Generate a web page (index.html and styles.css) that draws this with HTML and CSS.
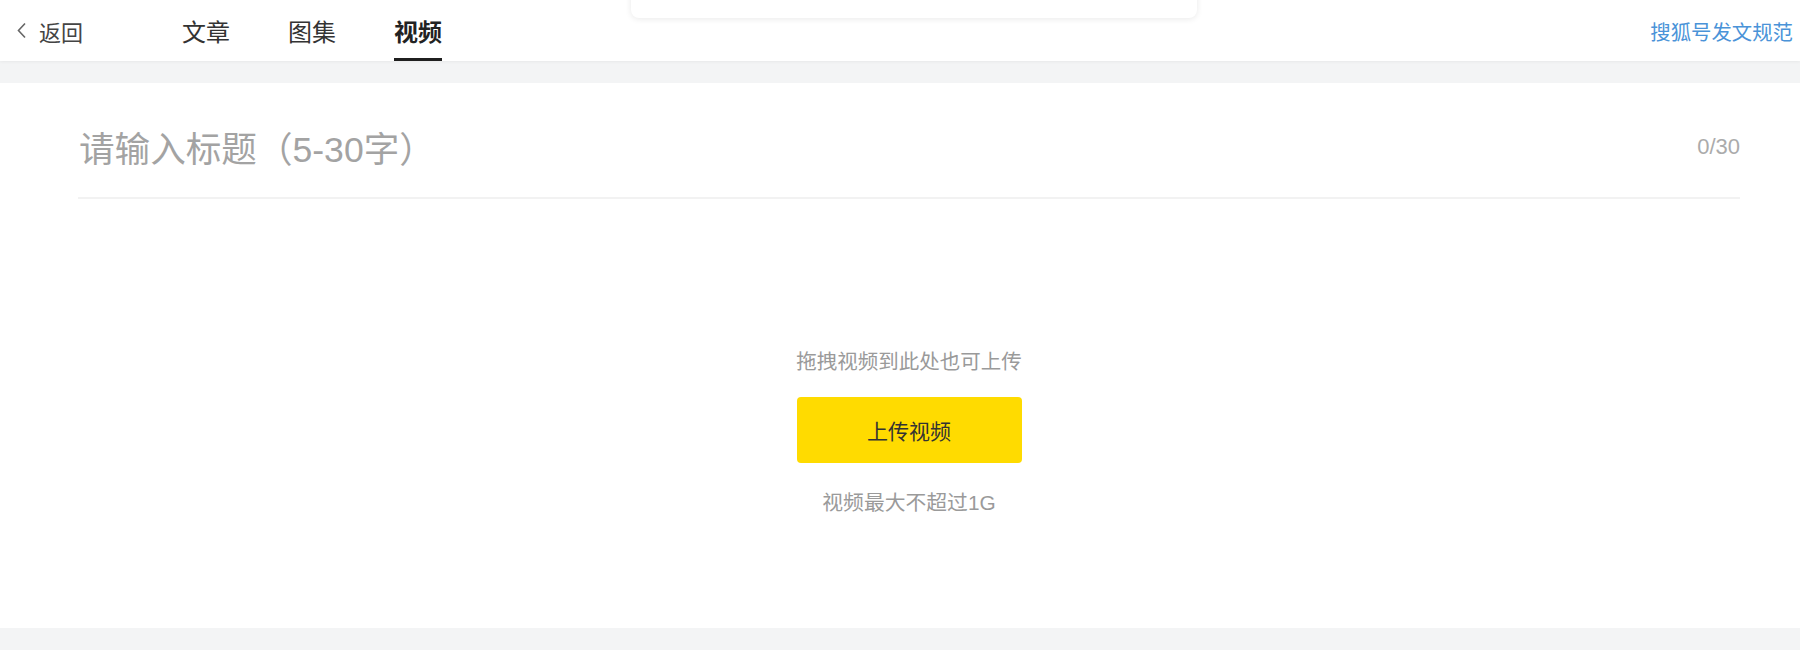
FILE: index.html
```html
<!DOCTYPE html>
<html lang="zh-CN">
<head>
<meta charset="utf-8">
<title>发布视频</title>
<link rel="stylesheet" href="styles.css">
</head>
<body>
<div class="page">
  <header class="topbar">
    <a class="back" href="#">
      <svg class="back-icon" width="11" height="17" viewBox="0 0 11 17"><path d="M9 1.5 L2.5 8.5 L9 15.5" fill="none" stroke="#666" stroke-width="1.6"/></svg>
      <span>返回</span>
    </a>
    <nav class="tabs">
      <a class="tab" href="#">文章</a>
      <a class="tab" href="#">图集</a>
      <a class="tab active" href="#">视频</a>
    </nav>
    <a class="rules" href="#">搜狐号发文规范</a>
    <div class="popup"></div>
  </header>
  <div class="band"></div>
  <main class="card">
    <div class="title-row">
      <span class="title-placeholder">请输入标题（5-30字）</span>
      <span class="counter">0/30</span>
    </div>
    <section class="upload">
      <p class="hint">拖拽视频到此处也可上传</p>
      <button class="upload-btn" type="button">上传视频</button>
      <p class="limit">视频最大不超过1G</p>
    </section>
  </main>
  <div class="band"></div>
</div>
</body>
</html>
```

FILE: styles.css
```css
* { box-sizing: border-box; }
html, body {
  margin: 0;
  padding: 0;
  background: #ffffff;
  font-family: "Liberation Sans", "Noto Sans CJK SC", sans-serif;
}
.page {
  width: 1800px;
  height: 669px;
  overflow: hidden;
}
a { text-decoration: none; }

.topbar {
  position: relative;
  height: 61px;
  display: flex;
  align-items: center;
  background: #fff;
  box-shadow: 0 1px 3px rgba(0, 0, 0, 0.05);
  z-index: 2;
}
.back {
  display: flex;
  align-items: center;
  gap: 12px;
  margin-left: 16px;
  color: #444;
  font-size: 22px;
}
.back-icon { display: block; }
.tabs {
  display: flex;
  gap: 58px;
  margin-left: 99px;
  height: 61px;
}
.tab {
  display: flex;
  align-items: center;
  height: 61px;
  padding-top: 2px;
  border-bottom: 3px solid transparent;
  color: #333;
  font-size: 24px;
}
.tab.active {
  border-bottom-color: #1f1f1f;
  font-weight: bold;
  color: #222;
}
.rules {
  margin-left: auto;
  margin-right: 7px;
  color: #4a93d8;
  font-size: 20.4px;
}
.popup {
  position: absolute;
  left: 631px;
  top: -12px;
  width: 566px;
  height: 30px;
  background: #fff;
  border-radius: 8px;
  box-shadow: 0 1px 6px rgba(0, 0, 0, 0.09);
}

.band {
  height: 22px;
  background: #f3f4f5;
}

.card {
  height: 545px;
  background: #fff;
  padding: 0 60px 0 78px;
  display: flex;
  flex-direction: column;
}
.title-row {
  display: flex;
  align-items: center;
  justify-content: space-between;
  padding: 47px 0 27px 1px;
  height: 116px;
  border-bottom: 2px solid #f2f2f2;
}
.title-placeholder {
  font-size: 35.6px;
  line-height: 40px;
  color: #a3a3a3;
}
.counter {
  font-size: 22px;
  line-height: 40px;
  color: #ababab;
  margin-top: -6px;
}

.upload {
  display: flex;
  flex-direction: column;
  align-items: center;
  padding-top: 148px;
}
.hint, .limit {
  margin: 0;
  line-height: 30px;
  color: #9a9a9a;
}
.hint { font-size: 20.5px; }
.limit { font-size: 20.8px; margin-top: 25px; }
.upload-btn {
  margin-top: 20px;
  width: 225px;
  height: 66px;
  border: none;
  border-radius: 4px;
  background: #ffdb00;
  color: #333;
  font-family: "Liberation Sans", "Noto Sans CJK SC", sans-serif;
  font-size: 21px;
  cursor: pointer;
}
```
